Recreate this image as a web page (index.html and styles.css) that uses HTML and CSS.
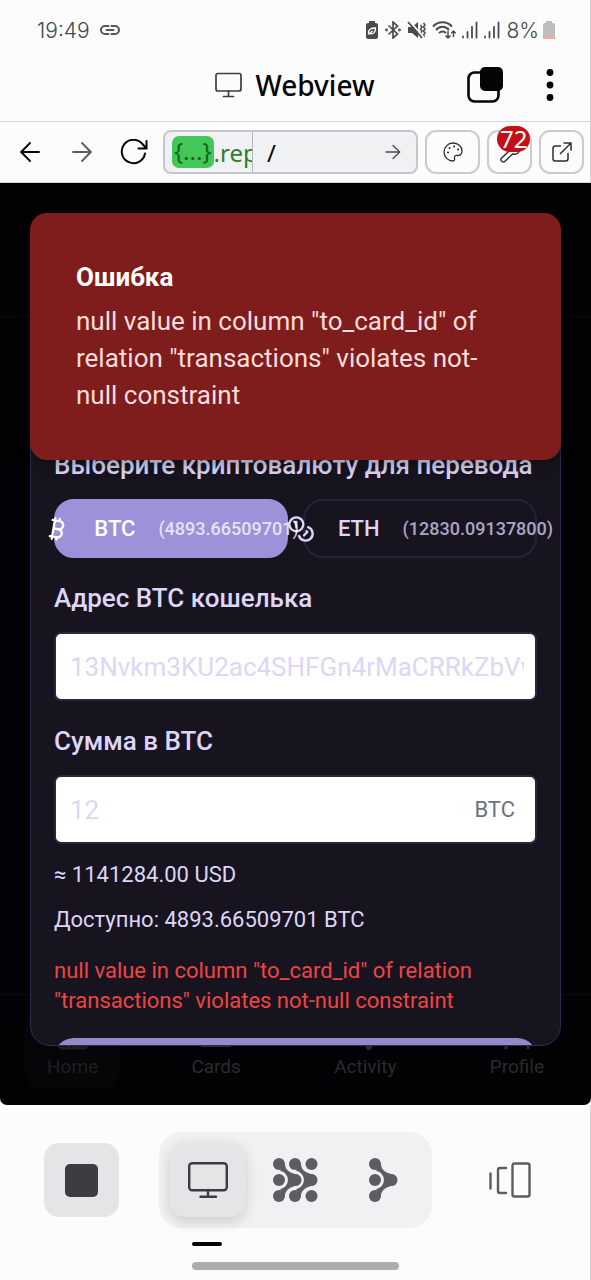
FILE: index.html
```html
<!DOCTYPE html>
<html lang="ru">
<head>
<meta charset="utf-8">
<meta name="viewport" content="width=device-width, initial-scale=1">
<title>Webview</title>
<link rel="stylesheet" href="styles.css">
</head>
<body>
<div class="app">
  <header class="chrome">
    <div class="status">
      <div class="status-left">
        <span>19:49</span>
        <svg width="20" height="12" viewBox="0 0 20 12" fill="none" stroke="#55575b" stroke-width="2" stroke-linecap="round"><path d="M8.500 2H5a4 4 0 0 0 0 8h3.500M11.500 2H15a4 4 0 0 1 0 8h-3.500M6.500 6h7"/></svg>
      </div>
      <div class="status-right">
        <svg width="14" height="18" viewBox="0 0 14 18"><path d="M4 0h6v2h1a2 2 0 0 1 2 2v12a2 2 0 0 1-2 2H3a2 2 0 0 1-2-2V4a2 2 0 0 1 2-2h1z" fill="#4a4b4f"/><path d="M3.500 12.500c-.5-4 2.500-5.500 7-5.500 0 4-2 6.500-5.500 5.500M3.500 13.500l4-3.500" fill="none" stroke="#fff" stroke-width="1.300"/></svg>
        <svg width="16" height="18" viewBox="0 0 16 18" fill="none" stroke="#4a4b4f" stroke-width="1.700"><path d="M3.500 4.500l9 8.500L8 17V1l4.500 4-9 8.500"/><circle cx="1.500" cy="9" r=".6"/><circle cx="14.500" cy="9" r=".6"/></svg>
        <svg width="19" height="18" viewBox="0 0 19 18"><path d="M1 6h4l6-5v16l-6-5H1z" fill="#4a4b4f"/><path d="M13.500 4l1.500 2-1.500 2 1.500 2-1.500 2 1.500 2M16.500 2l1.500 2-1.500 2 1.500 2-1.500 2 1.500 2-1.500 2 1 2" fill="none" stroke="#4a4b4f" stroke-width="1.500"/><path d="M2.500 0l14 16" stroke="#fcfcfc" stroke-width="1.800"/><path d="M1 1l14 16" stroke="#4a4b4f" stroke-width="1.800"/></svg>
        <svg width="24" height="18" viewBox="0 0 24 18" fill="none" stroke="#4a4b4f" stroke-width="2"><path d="M1 5.500C6-.2 15-.2 20 5.500M4 9c4-4.200 9.500-4.200 13 0M7 12.200c2-2.200 5-2.200 7 0"/><path d="M16 10v7m-2.500-2.500L16 17l2.500-2.500M21.500 16v-6m-2.200 2.200L21.500 10l2.200 2.200" stroke-width="1.500"/></svg>
        <svg width="16" height="18" viewBox="0 0 16 18" stroke="#4a4b4f" stroke-width="1.800" stroke-linecap="round"><path d="M1 15.500v1M5.500 11v5.500M10 6v10.500M14.500 1.500v15"/></svg>
        <svg width="16" height="18" viewBox="0 0 16 18" stroke="#4a4b4f" stroke-width="1.800" stroke-linecap="round"><path d="M1 15.500v1M5.500 11v5.500M10 6v10.500M14.500 1.500v15"/></svg>
        <span class="battery"><span>8%</span>
        <svg width="12" height="18" viewBox="0 0 12 18"><path d="M3 0h6v2h1a2 2 0 0 1 2 2v13a1 1 0 0 1-1 1H1a1 1 0 0 1-1-1V4a2 2 0 0 1 2-2h1z" fill="#bdbdbd"/><path d="M0 15h12v2a1 1 0 0 1-1 1H1a1 1 0 0 1-1-1z" fill="#f5a9a0"/></svg></span>
      </div>
    </div>
    <div class="titlebar">
      <div class="title">
        <svg width="28" height="26" viewBox="0 0 28 26" fill="none" stroke="#3c3d42" stroke-width="1.700" stroke-linecap="round"><rect x="1" y="1.500" width="25" height="17.500" rx="2"/><path d="M13.500 19v5M8.500 24.500h10"/></svg>
        <h1>Webview</h1>
      </div>
      <div class="title-actions">
        <button class="plain" aria-label="Tabs"><svg width="36" height="36" viewBox="0 0 36 36"><rect x="1.500" y="5.500" width="30" height="29" rx="6" fill="none" stroke="#050505" stroke-width="2.600"/><rect x="13" y="0" width="23" height="24" rx="5" fill="#050505"/></svg></button>
        <button class="plain" aria-label="More"><svg width="8" height="32" viewBox="0 0 8 32"><circle cx="4" cy="3.500" r="3.400"/><circle cx="4" cy="16" r="3.400"/><circle cx="4" cy="28.500" r="3.400"/></svg></button>
      </div>
    </div>
    <div class="urlbar">
      <button class="nav-btn" aria-label="Back"><svg width="20" height="20" viewBox="0 0 20 20" fill="none" stroke="#050505" stroke-width="1.900" stroke-linecap="round"><path d="M19 10H1.500M10 1L1.200 10l8.800 9"/></svg></button>
      <button class="nav-btn" aria-label="Forward"><svg width="20" height="20" viewBox="0 0 20 20" fill="none" stroke="#5c5d62" stroke-width="1.900" stroke-linecap="round"><path d="M1 10h17.500M10 1l8.800 9-8.800 9"/></svg></button>
      <button class="nav-btn" aria-label="Reload"><svg width="28" height="26" viewBox="0 0 28 26" fill="none" stroke="#050505" stroke-width="2" stroke-linecap="round"><path d="M25 14.500A11.700 11.700 0 1 1 22.500 5l3.500 4M26.500 2v7.500h-8"/></svg></button>
      <div class="address">
        <div class="host"><span class="host-tag">{...}</span><span>.replit.dev</span></div>
        <input class="path" value="/" aria-label="Path">
        <button class="go" aria-label="Go"><svg width="16" height="16" viewBox="0 0 16 16" fill="none" stroke="#4a4b50" stroke-width="1.300" stroke-linecap="round"><path d="M1 8h13.500M8 1.500L14.700 8 8 14.500"/></svg></button>
      </div>
      <button class="tool tool-wide" aria-label="Theme"><svg width="20" height="20" viewBox="0 0 20 20" fill="none" stroke="#2d2e33" stroke-width="1.300"><path d="M10 1c5 0 9 3.600 9 8 0 3-2 5-4.500 4.500-2-.4-3.500.3-3 2.500.4 1.600 0 3-1.500 3-5 0-9-4-9-9s4-9 9-9z"/><path d="M5 10.500h.1M6.500 6h.1M11 4.500h.1M15 7.500h.1" stroke-width="1.900" stroke-linecap="round"/></svg></button>
      <button class="tool" aria-label="Dev tools"><svg width="22" height="22" viewBox="0 0 22 22" fill="none" stroke="#2d2e33" stroke-width="1.400" stroke-linejoin="round"><path d="M13 4a5.500 5.500 0 0 1 6.500-1.500L16 6l1 2.500 2.500 1L21 6c1 5-3 8-7.500 7L6 20.300a2.300 2.300 0 0 1-3.300-3.300l7.600-7.300A6 6 0 0 1 13 4z"/></svg><span class="count">72</span></button>
      <button class="tool" aria-label="Open in new tab"><svg width="20" height="20" viewBox="0 0 20 20" fill="none" stroke="#2d2e33" stroke-width="1.500" stroke-linecap="round" stroke-linejoin="round"><path d="M8.500 4H3.200A2.200 2.200 0 0 0 1 6.200v10.600A2.200 2.200 0 0 0 3.200 19h10.600a2.200 2.200 0 0 0 2.200-2.200V11.500M12 1h7v7M19 1L8.500 11.500"/></svg></button>
    </div>
  </header>

  <main class="screen">
    <div class="page-header"></div>
    <nav class="tabs">
      <a class="tab tab-on" href="#"><svg width="32" height="30" viewBox="0 0 32 30" fill="none" stroke="currentColor" stroke-width="3"><path d="M2 12L16 2l14 10v13a3 3 0 0 1-3 3H5a3 3 0 0 1-3-3zM11 28V17h10v11"/></svg>Home</a>
      <a class="tab" href="#"><svg width="32" height="30" viewBox="0 0 32 30" fill="currentColor"><rect y="4" width="32" height="23" rx="3"/></svg>Cards</a>
      <a class="tab" href="#"><svg width="32" height="30" viewBox="0 0 32 30" fill="none" stroke="currentColor" stroke-width="5" stroke-linejoin="round"><path d="M-3 15h6l6-11 11 24 4-13h8"/></svg>Activity</a>
      <a class="tab" href="#"><svg width="32" height="30" viewBox="0 0 32 30" fill="none" stroke="currentColor" stroke-width="3"><circle cx="16" cy="8" r="6"/><path d="M5 29v-5a5 5 0 0 1 5-5h12a5 5 0 0 1 5 5v5"/></svg>Profile</a>
    </nav>

    <form class="modal">
      <div class="field">
        <span class="label">Выберите криптовалюту для перевода</span>
        <div class="coins">
          <button type="button" class="coin coin-on"><svg width="28" height="28" viewBox="0 0 24 24" fill="none" stroke="currentColor" stroke-width="2" stroke-linecap="round" stroke-linejoin="round"><path d="M11.767 19.089c4.924.868 6.140-6.025 1.216-6.894m-1.216 6.894L5.860 18.047m5.908 1.042-.347 1.970m1.563-8.864c4.924.869 6.140-6.025 1.215-6.893m-1.215 6.893-3.940-.694m5.155-6.200L8.290 4.260m5.908 1.042.348-1.970M7.480 20.364l3.126-17.727"/></svg><span>BTC</span><span class="balance">(4893.66509701)</span></button>
          <button type="button" class="coin"><svg width="28" height="28" viewBox="0 0 24 24" fill="none" stroke="currentColor" stroke-width="2" stroke-linecap="round" stroke-linejoin="round"><circle cx="8" cy="8" r="6"/><path d="M18.090 10.370A6 6 0 1 1 10.340 18M7 6h1v4M16.710 13.880l.7.710-2.820 2.820"/></svg><span>ETH</span><span class="balance">(12830.09137800)</span></button>
        </div>
      </div>
      <div class="field">
        <label class="label" for="wallet">Адрес BTC кошелька</label>
        <input class="text" id="wallet" value="13Nvkm3KU2ac4SHFGn4rMaCRRkZbVvX">
      </div>
      <div class="field">
        <label class="label" for="amount">Сумма в BTC</label>
        <div class="amount">
          <input class="text" id="amount" value="12">
          <span class="unit">BTC</span>
        </div>
        <p class="note">≈ 1141284.00 USD</p>
        <p class="note">Доступно: 4893.66509701 BTC</p>
      </div>
      <p class="error">null value in column "to_card_id" of relation "transactions" violates not-null constraint</p>
      <button class="submit" type="submit" aria-label="Перевести"></button>
    </form>

    <div class="toast" role="alert">
      <strong>Ошибка</strong>
      <p>null value in column "to_card_id" of relation "transactions" violates not-null constraint</p>
    </div>
  </main>

  <footer class="dock">
    <div class="dock-row">
      <button class="dock-btn stop" aria-label="Stop"><svg width="33" height="33" viewBox="0 0 33 33"><rect width="33" height="33" rx="5" fill="#3c3d42"/></svg></button>
      <div class="switcher">
        <button class="dock-btn active" aria-label="Webview"><svg width="40" height="36" viewBox="0 0 40 36" fill="none" stroke="#3c3d42" stroke-width="2.400" stroke-linecap="round"><rect x="1.200" y="1.200" width="37.600" height="27" rx="3"/><path d="M20 28v6.500M12.500 34.800h15.500"/></svg></button>
        <button class="dock-btn" aria-label="Agent"><svg width="45" height="44" viewBox="0 0 45 44" fill="#5c5d62"><defs><g id="fork"><circle cx="6" cy="6" r="6"/><circle cx="6" cy="38" r="6"/><path d="M11.900 5C12 12 16 14 22 16a6 6 0 0 1 1 12h-1C16 30 12 32 11.900 39L7 31.200A9.300 9.300 0 0 0 7 12.800z"/></g></defs><use href="#fork" x="16"/><use href="#fork" stroke="#f0f1f3" stroke-width="3"/><use href="#fork"/><circle cx="6" cy="22" r="6"/><circle cx="38.500" cy="6" r="6"/><circle cx="38.500" cy="38" r="6"/></svg></button>
        <button class="dock-btn" aria-label="Assistant"><svg width="29" height="44" viewBox="0 0 29 44" fill="#5c5d62"><use href="#fork"/><circle cx="6" cy="22" r="6"/></svg></button>
      </div>
      <button class="dock-btn" aria-label="Panels"><svg width="42" height="36" viewBox="0 0 42 36" fill="none" stroke="#5c5d62" stroke-width="2.400" stroke-linecap="round" stroke-linejoin="round"><rect x="23.500" y="1.500" width="17" height="33" rx="2"/><path d="M17 6h-6a2 2 0 0 0-2 2v21a2 2 0 0 0 2 2h6M1.500 11.500v15"/></svg></button>
    </div>
    <div class="home-bar"></div>
  </footer>
</div>
</body>
</html>
```
FILE: styles.css
```css
* { box-sizing: border-box; }
body { margin: 0; background: #fcfcfc; font-family: Roboto, "Noto Sans", sans-serif; }
button { border: 0; padding: 0; background: none; font: inherit; color: inherit; }
svg { display: block; flex: none; }
p, h1 { margin: 0; }

.app { min-height: 100vh; display: flex; flex-direction: column; }

.chrome { border-right: 1px solid #d2d2d4; }
.status { height: 60px; padding: 0 35px 0 37px; display: flex; align-items: center; justify-content: space-between; font-family: Inter, sans-serif; font-size: 21px; font-weight: 300; color: #45464a; }
.status-left { display: flex; align-items: center; gap: 10px; }
.status-right { display: flex; align-items: center; gap: 6px; }
.battery { display: flex; align-items: center; gap: 4px; }

.titlebar { height: 62px; border-bottom: 1px solid #d4d5d8; display: grid; grid-template-columns: 1fr auto 1fr; align-items: center; padding: 0 36px 12px; }
.title { grid-column: 2; display: flex; align-items: center; gap: 12px; }
.title h1 { font-family: "Noto Sans", sans-serif; font-size: 28px; line-height: 36px; font-weight: 500; color: #050505; }
.title-actions { display: flex; align-items: center; justify-content: flex-end; gap: 43px; }

.urlbar { height: 61px; border-bottom: 1px solid #d4d5d8; padding: 0 6px 0 4px; display: flex; align-items: center; }
.nav-btn { width: 52px; height: 44px; display: grid; place-items: center; }
.address { flex: 1; min-width: 0; height: 44px; margin-left: 3px; display: flex; align-items: stretch; border: 2px solid #c4c6cb; border-radius: 8px; background: #f0f1f3; font-family: "Noto Sans", sans-serif; font-size: 24px; overflow: hidden; }
.host { width: 88px; padding-left: 7px; display: flex; align-items: center; overflow: hidden; border-right: 1px solid #b4b6bb; color: #2f7d32; }
.host-tag { padding: 0 2px; height: 32px; line-height: 30px; border-radius: 7px; background: #43c758; color: #14641f; }
.path { flex: 1; min-width: 0; border: 0; padding: 0 14px; background: none; font: inherit; color: #050505; }
.go { width: 46px; display: grid; place-items: center; }
.tool { position: relative; width: 45px; height: 44px; margin-left: 7px; display: grid; place-items: center; border: 2px solid #cbccd0; border-radius: 11px; }
.tool-wide { width: 55px; }
.count { position: absolute; top: -6px; left: 8px; padding: 0 3px; border-radius: 13px; background: #c40f17; color: #fff; font-family: "Noto Sans", sans-serif; font-size: 24px; line-height: 26px; }

.screen { position: relative; flex: 1; min-height: 922px; display: flex; flex-direction: column; justify-content: space-between; overflow: hidden; border-radius: 0 0 7px 7px; background: #020204; }
.page-header { height: 134px; border-bottom: 1px solid #0c0c0f; }
.tabs { padding: 16px 25px; display: flex; justify-content: space-between; border-top: 1px solid #0c0c0f; }
.tab { display: flex; flex-direction: column; align-items: center; gap: 4px; padding: 9px 22px; border-radius: 18px; font-size: 19px; line-height: 26px; color: #2b2b2e; text-decoration: none; }
.tab-on { background: #060608; color: #1f1f22; }

.modal { position: absolute; inset: 59px 30px; padding: 204px 23px 0; display: flex; flex-direction: column; gap: 22px; overflow: hidden; border: 1px solid #2f2a55; border-radius: 20px; background: #17141f; color: #ddd6fa; }
.field { display: flex; flex-direction: column; gap: 16px; }
.label { font-size: 26px; line-height: 36px; font-weight: 500; white-space: nowrap; }
.coins { display: grid; grid-template-columns: 1fr 1fr; gap: 15px; }
.coin { min-width: 0; height: 59px; display: flex; align-items: center; justify-content: center; gap: 23px; border: 2px solid #28233c; border-radius: 20px; font-size: 22px; font-weight: 500; white-space: nowrap; color: #ddd6fa; }
.coin-on { border-color: #9d91d9; background: #9d91d9; color: #fff; }
.balance { font-size: 18px; opacity: 0.75; }
.text { width: 100%; height: 69px; padding: 0 11px 0 14px; border: 2px solid #2b2638; border-radius: 7px; background: #fff; font: inherit; font-size: 26px; color: #ddd6f5; }
.amount { position: relative; }
.unit { position: absolute; top: 0; right: 22px; line-height: 69px; font-size: 22px; color: #6b7280; }
.note { font-size: 22px; line-height: 29px; }
.error { font-size: 22px; line-height: 30px; color: #ef4444; }
.submit { flex: none; height: 62px; border-radius: 20px; background: #9589cb; }

.toast { position: absolute; top: 30px; left: 30px; right: 30px; padding: 46px 46px 46px; border-radius: 17px; background: #7f1d1d; box-shadow: 0 6px 14px rgba(0, 0, 0, 0.3); font-size: 26px; line-height: 37px; color: #fbdcdc; }
.toast strong { display: block; margin-bottom: 7px; font-weight: 700; color: #fff; }

.dock { border-right: 1px solid #d2d2d4; padding: 27px 43px 10px 44px; display: flex; flex-direction: column; align-items: center; gap: 34px; }
.dock-row { width: 100%; display: flex; align-items: center; justify-content: space-between; }
.dock-btn { position: relative; width: 75px; height: 74px; display: grid; place-items: center; border-radius: 15px; }
.stop { background: #e3e5e7; }
.switcher { display: flex; gap: 13px; padding: 11px; border-radius: 23px; background: #f0f1f3; }
.active { background: #e3e5e7; box-shadow: 0 4px 14px rgba(0, 0, 0, 0.16); }
.active::after { content: ""; position: absolute; left: 22px; right: 23px; bottom: -29px; height: 4px; border-radius: 2px; background: #050505; }
.home-bar { width: 207px; height: 8px; border-radius: 4px; background: #adadad; }
```
